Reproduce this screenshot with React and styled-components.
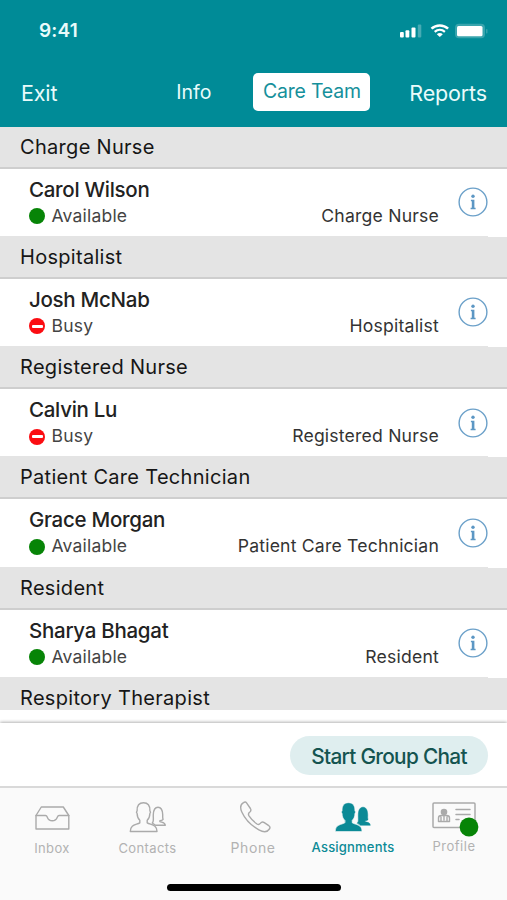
import React from 'react';
import styled, { createGlobalStyle } from 'styled-components';

const GlobalStyle = createGlobalStyle`
    * {
        box-sizing: border-box;
    }
    body {
        margin: 0;
        background: #fff;
        font-family: Inter, Roboto, "Liberation Sans", sans-serif;
    }
`;

const Screen = styled.div`
    width: 507px;
    height: 900px;
    display: flex;
    flex-direction: column;
    overflow: hidden;
    white-space: nowrap;
    background: #fff;
    color: #222;
`;

const Header = styled.header`
    height: 126.6px;
    flex: none;
    background: #008b97;
    color: #e9fbfb;
`;

const StatusBar = styled.div`
    height: 61px;
    padding: 0 19px 0 39px;
    display: flex;
    align-items: center;
    justify-content: space-between;
`;

const Time = styled.span`
    font-size: 19px;
    font-weight: 600;
    letter-spacing: 0.2px;
`;

const StatusIcons = styled.svg`
    display: block;
    width: 88px;
    height: 18px;
`;

const Nav = styled.nav`
    height: 64px;
    padding: 0 20px 0 21px;
    display: flex;
    align-items: center;
    justify-content: space-between;
`;

const NavLink = styled.span`
    font-size: 21.5px;
    line-height: 26px;
    letter-spacing: -0.15px;
`;

const Tabs = styled.div`
    display: flex;
    align-items: center;
    gap: 42px;
    margin: 0 1px 2px 81px;
    font-size: 19.5px;
`;

const Tab = styled.span`
    letter-spacing: 0;
`;

const ActiveTab = styled.span`
    width: 117px;
    height: 38px;
    line-height: 37px;
    border-radius: 5px;
    text-align: center;
    background: #fff;
    color: #16909b;
    letter-spacing: -0.2px;
`;

const List = styled.main`
    height: 583px;
    flex: none;
    overflow: hidden;
`;

const Group = styled.section`
    height: 110.3px;
`;

const GroupTitle = styled.h2`
    margin: 0;
    height: 42px;
    padding-left: 20px;
    border-bottom: 2px solid #cecece;
    background: #e4e4e4;
    color: #161616;
    font-size: 20px;
    font-weight: 400;
    line-height: 41px;
    letter-spacing: 0.3px;
`;

const Member = styled.div`
    height: 68.3px;
    padding: 7px 19px 0 29px;
    display: flex;
    background: linear-gradient(#e4e4e4, #e4e4e4) left bottom / 488px 1px no-repeat;
`;

const Who = styled.div`
    flex: 1;
`;

const Name = styled.div`
    font-size: 20.5px;
    line-height: 27px;
    font-weight: 450;
    letter-spacing: -0.28px;
`;

const Status = styled.div`
    display: flex;
    align-items: center;
    gap: 6.5px;
    font-size: 17.5px;
    line-height: 25px;
    letter-spacing: 0.2px;
    color: #444;
`;

const StatusDot = styled.span`
    width: 16px;
    height: 16px;
    margin-top: 2px;
    border-radius: 50%;
    display: flex;
    align-items: center;
    justify-content: center;
    background: ${p => (p.$busy ? '#fb0d12' : '#078407')};

    &::after {
        content: '';
        display: ${p => (p.$busy ? 'block' : 'none')};
        width: 11px;
        height: 3px;
        border-radius: 1px;
        background: #fff;
    }
`;

const Role = styled.div`
    padding-top: 27px;
    margin-right: 19px;
    font-size: 17.6px;
    line-height: 25px;
    letter-spacing: 0.2px;
    color: #333;
`;

const InfoIcon = styled.svg`
    display: block;
    width: 30px;
    height: 30px;
    margin-top: 11.4px;
`;

const ActionBar = styled.div`
    height: 63px;
    margin-top: 13.4px;
    flex: none;
    padding: 13.5px 19px 0 0;
    display: flex;
    justify-content: flex-end;
    background: #fff;
    box-shadow: 0 -1px 3px rgba(0, 0, 0, 0.3);
`;

const ChatButton = styled.button`
    width: 198px;
    height: 39px;
    padding: 1px 0 0;
    border: none;
    border-radius: 20px;
    background: #dfeeef;
    color: #145450;
    font-family: inherit;
    font-size: 20.8px;
    font-weight: 450;
    letter-spacing: -0.7px;
`;

const TabBar = styled.footer`
    flex: 1;
    border-top: 2px solid #d9d9d9;
    background: #fafafa;
    display: flex;
    flex-direction: column;
    align-items: center;
`;

const TabItems = styled.div`
    width: 507px;
    height: 96px;
    padding-left: 20px;
    display: grid;
    grid-template-columns: 64px 127px 84px 116px 86px;
`;

const TabItem = styled.div`
    display: flex;
    flex-direction: column;
    align-items: center;
    color: ${p => (p.$active ? '#0b8a96' : '#b2b2b2')};
`;

const TabIcon = styled.svg`
    display: block;
    width: 50px;
    height: 44px;
    margin-top: 10px;
    overflow: visible;
    fill: none;
    stroke: #aaa;
    stroke-width: 1.4;
    stroke-linejoin: round;
    stroke-linecap: round;
`;

const TabLabel = styled.span`
    font-size: ${p => p.$size || 13}px;
    line-height: 16px;
    margin-top: ${p => p.$top}px;
    font-weight: ${p => (p.$active ? 500 : 400)};
    letter-spacing: ${p => p.$spacing || 0.4}px;
`;

const HomeIndicator = styled.div`
    width: 174px;
    height: 7px;
    border-radius: 4px;
    background: #000;
`;

const groups = [
    { title: 'Charge Nurse', name: 'Carol Wilson', status: 'Available' },
    { title: 'Hospitalist', name: 'Josh McNab', status: 'Busy' },
    { title: 'Registered Nurse', name: 'Calvin Lu', status: 'Busy' },
    { title: 'Patient Care Technician', name: 'Grace Morgan', status: 'Available' },
    { title: 'Resident', name: 'Sharya Bhagat', status: 'Available' },
    { title: 'Respitory Therapist' },
];

const Info = () => (
    <InfoIcon viewBox="0 0 30 30">
        <circle cx="15" cy="15" r="13.9" fill="none" stroke="#6ba0c9" strokeWidth="1.4" />
        <circle cx="15" cy="9.3" r="1.7" fill="#5c97c4" />
        <path d="M12.900 12.800h3.500v8h1.200v1.400h-5v-1.400h1.200v-6.600h-0.900z" fill="#5c97c4" />
    </InfoIcon>
);

const People = ({ active }) => (
    <TabIcon viewBox="0 0 50 44">
        <path
            d="M29.300 25c1.800-1.300.8-3.800 1-8.500.2-5 1.900-7.300 4.700-7.300s4.500 2.300 4.700 7.300c.1 2.500-.3 3.500.4 4.900-.8 1-2 1.300-3.200 1.300v.9c2.300.9 5.200.7 5.400 3.700h-9.800z"
            fill={active ? '#0b8a96' : 'none'}
            stroke={active ? '#0b8a96' : '#aaa'}
            strokeWidth={active ? 0.5 : 1.4}
        />
        <path
            d="M16.800 22.300c-1.900-1.600-2.600-4-2.700-6.800-.9-.9-.6-2 0-2.700-.2-5.200 2-8.100 6.400-8.100s6.600 2.900 6.400 8.100c.6.700.9 1.800 0 2.700-.1 2.800-.8 5.200-2.700 6.800v2.500c3.300 2.200 9.800 1.400 9.800 8.700H7.300c0-7.300 6.200-6.500 9.500-8.700z"
            fill={active ? '#0b8a96' : '#fafafa'}
            stroke={active ? '#fafafa' : '#aaa'}
            strokeWidth={active ? 0.6 : 1.4}
        />
    </TabIcon>
);

const App = () => {
    return (
        <Screen>
            <GlobalStyle />
            <Header>
                <StatusBar>
                    <Time>9:41</Time>
                    <StatusIcons viewBox="0 0 88 18" fill="#fff">
                        <rect x="0" y="10" width="3.800" height="5.500" rx="1" />
                        <rect x="5.500" y="8.300" width="3.800" height="7.200" rx="1" />
                        <rect x="11.500" y="5.500" width="4" height="10" rx="1" />
                        <rect x="17.800" y="2.500" width="3.500" height="13" rx="1" opacity="0.28" />
                        <path d="M31.500 6.600c4.600-4.300 12-4.300 16.600 0" fill="none" stroke="#fff" strokeWidth="2.500" />
                        <path d="M34.700 9.900c3-2.600 7.200-2.600 10.200 0" fill="none" stroke="#fff" strokeWidth="2.200" />
                        <path d="M36.800 12.200c1.800-1.500 4.200-1.500 6 0l-3 2.900z" />
                        <rect x="55" y="1.800" width="30" height="14.500" rx="4" opacity="0.22" />
                        <rect x="57" y="4" width="25.500" height="10.300" rx="1.500" />
                        <rect x="86" y="7" width="1.500" height="4.500" rx="0.700" opacity="0.2" />
                    </StatusIcons>
                </StatusBar>
                <Nav>
                    <NavLink>Exit</NavLink>
                    <Tabs>
                        <Tab>Info</Tab>
                        <ActiveTab>Care Team</ActiveTab>
                    </Tabs>
                    <NavLink>Reports</NavLink>
                </Nav>
            </Header>

            <List>
                {groups.map(g => (
                    <Group key={g.title}>
                        <GroupTitle>{g.title}</GroupTitle>
                        {g.name && (
                            <Member>
                                <Who>
                                    <Name>{g.name}</Name>
                                    <Status>
                                        <StatusDot $busy={g.status === 'Busy'} />
                                        {g.status}
                                    </Status>
                                </Who>
                                <Role>{g.title}</Role>
                                <Info />
                            </Member>
                        )}
                    </Group>
                ))}
            </List>

            <ActionBar>
                <ChatButton>Start Group Chat</ChatButton>
            </ActionBar>

            <TabBar>
                <TabItems>
                    <TabItem>
                        <TabIcon viewBox="0 0 50 44">
                            <path d="M9 17.500 14.300 9h22l5.500 8.500V31H9z" />
                            <path d="M9 17.500h9.500c1.200 0 1.400.7 1.800 1.700 1.800 4.800 8.200 4.800 10 0 .4-1 .7-1.700 1.800-1.700h9.700" />
                        </TabIcon>
                        <TabLabel $top={-2}>Inbox</TabLabel>
                    </TabItem>
                    <TabItem>
                        <People />
                        <TabLabel $top={-2}>Contacts</TabLabel>
                    </TabItem>
                    <TabItem>
                        <TabIcon viewBox="0 0 50 44">
                            <path d="M15.500 4.600c1.400-1 2.400-.8 3.400.7l3.500 5.200c1 1.600.6 2.700-.8 3.800-1.400 1-1.500 2-.6 3.500 2.200 3.400 4.700 5.800 8 8.200 1.300.9 2.300.7 3.300-.6 1.200-1.500 2.400-1.800 4-.7l4.500 3c1.400 1 1.500 2 .6 3.300-2.200 3.400-6 3.300-10.500.8C23 27.500 17 21 13.800 14c-2-4.600-1.500-7.600 1.700-9.400z" />
                        </TabIcon>
                        <TabLabel $top={-2} $size={14} $spacing={0.6}>Phone</TabLabel>
                    </TabItem>
                    <TabItem $active>
                        <People active />
                        <TabLabel $active $top={-3} $spacing={0.2}>Assignments</TabLabel>
                    </TabItem>
                    <TabItem>
                        <TabIcon viewBox="0 0 50 44">
                            <rect x="4" y="5" width="42" height="24.500" rx="1" strokeWidth="1.500" />
                            <circle cx="15" cy="14" r="3.300" fill="#aaa" stroke="none" />
                            <path d="M9.500 23.500v-3.500c0-1.500 1-2.500 2.800-2.500h5.400c1.800 0 2.800 1 2.800 2.500v3.500zM12 19v4.500M18 19v4.500M15 18v4" />
                            <path d="M27 11.500H41M27 16.500H41M27 21.500h3" strokeWidth="1.500" />
                            <circle cx="40" cy="29" r="9.400" fill="#078407" stroke="none" />
                        </TabIcon>
                        <TabLabel $top={-4} $spacing={0.5}>Profile</TabLabel>
                    </TabItem>
                </TabItems>
                <HomeIndicator />
            </TabBar>
        </Screen>
    );
};

export default App;
